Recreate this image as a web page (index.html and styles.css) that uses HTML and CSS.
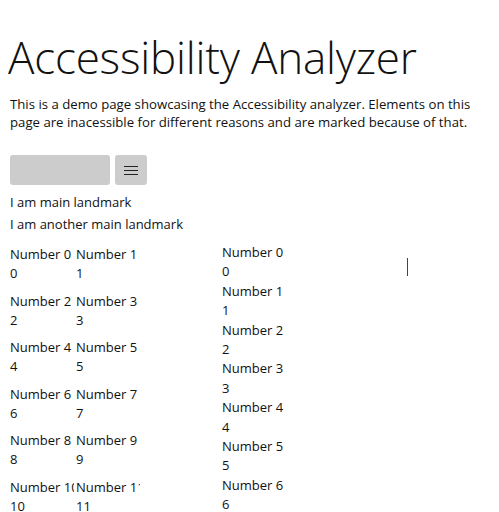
FILE: index.html
```html
<!DOCTYPE html>
<html>
<head>
<meta charset="utf-8">
<link rel="stylesheet" href="styles.css">
</head>
<body>
<div class="page">
  <h1 class="title">Accessibility Analyzer</h1>
  <p class="intro">This is a demo page showcasing the Accessibility analyzer. Elements on this page are inacessible for different reasons and are marked because of that.</p>
  <div class="toolbar">
    <div class="btn-wide"></div>
    <div class="btn-menu">
      <svg width="14" height="10" viewBox="0 0 14 10"><path d="M0 1.5H14M0 5.5H14M0 9.5H14" stroke="#222" stroke-width="1"/></svg>
    </div>
  </div>
  <div class="landmarks">
    <div class="landmark">I am main landmark</div>
    <div class="landmark">I am another main landmark</div>
  </div>
  <div class="content">
    <div class="grid">
      <div class="cell"><div>Number 0</div><div>0</div></div>
      <div class="cell"><div>Number 1</div><div>1</div></div>
      <div class="cell"><div>Number 2</div><div>2</div></div>
      <div class="cell"><div>Number 3</div><div>3</div></div>
      <div class="cell"><div>Number 4</div><div>4</div></div>
      <div class="cell"><div>Number 5</div><div>5</div></div>
      <div class="cell"><div>Number 6</div><div>6</div></div>
      <div class="cell"><div>Number 7</div><div>7</div></div>
      <div class="cell"><div>Number 8</div><div>8</div></div>
      <div class="cell"><div>Number 9</div><div>9</div></div>
      <div class="cell"><div>Number 10</div><div>10</div></div>
      <div class="cell"><div>Number 11</div><div>11</div></div>
    </div>
    <div class="list">
      <div class="item"><div>Number 0</div><div>0</div></div>
      <div class="item"><div>Number 1</div><div>1</div></div>
      <div class="item"><div>Number 2</div><div>2</div></div>
      <div class="item"><div>Number 3</div><div>3</div></div>
      <div class="item"><div>Number 4</div><div>4</div></div>
      <div class="item"><div>Number 5</div><div>5</div></div>
      <div class="item"><div>Number 6</div><div>6</div></div>
    </div>
    <div class="side"><span class="caret"></span></div>
  </div>
</div>
</body>
</html>
```
FILE: styles.css
```css
html, body {
  margin: 0;
  padding: 0;
  background: #fff;
}
body {
  font-family: "Open Sans", "Noto Sans", sans-serif;
  color: #111;
  font-size: 13px;
}
.page {
  padding: 0 10px;
  height: 512px;
  overflow: hidden;
}
.title {
  font-size: 44px;
  font-weight: 300;
  margin: 30px 0 0 -2px;
  line-height: 54px;
  letter-spacing: -0.2px;
}
.intro {
  margin: 11px 0 0;
  line-height: 18px;
  font-size: 13.2px;
}
.toolbar {
  display: flex;
  gap: 5px;
  margin-top: 24px;
}
.btn-wide {
  width: 100px;
  height: 30px;
  background: #ccc;
  border-radius: 3px;
}
.btn-menu {
  width: 32px;
  height: 30px;
  background: #ccc;
  border-radius: 3px;
  display: flex;
  align-items: center;
  justify-content: center;
}
.landmarks {
  margin-top: 6px;
}
.landmark {
  line-height: 22px;
}
.content {
  display: flex;
  margin-top: 10px;
}
.grid {
  display: grid;
  grid-template-columns: 66px 66px;
  grid-auto-rows: 46.5px;
  width: 212px;
  align-content: start;
}
.cell {
  width: 64px;
  overflow: hidden;
  white-space: nowrap;
  line-height: 19px;
}
.list {
  width: 185px;
  margin-top: -2px;
}
.item {
  line-height: 19.4px;
}
.side {
  padding-top: 13px;
}
.caret {
  display: block;
  width: 1px;
  height: 18px;
  background: #444;
}
```
